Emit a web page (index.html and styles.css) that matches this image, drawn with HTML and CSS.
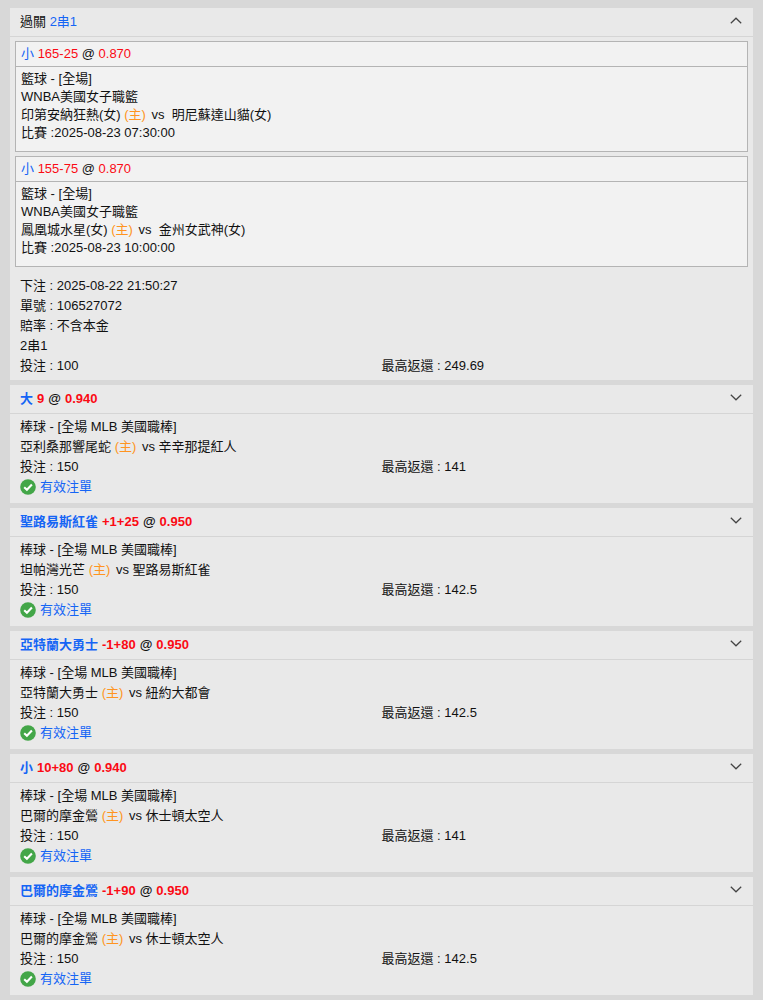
FILE: index.html
```html
<!DOCTYPE html>
<html lang="zh-Hant">
<head>
    <meta charset="UTF-8">
    <meta name="viewport" content="width=device-width, initial-scale=1.0">
    <title>注單</title>
    <link rel="stylesheet" href="styles.css">
</head>
<body>
    <svg width="0" height="0" class="sprite" aria-hidden="true">
        <symbol id="chevron" viewBox="0 0 12 7">
            <path d="M0.8 0.8 L6 5.8 L11.2 0.8" fill="none" stroke="#444" stroke-width="1.2"/>
        </symbol>
        <symbol id="check" viewBox="0 0 16 16">
            <circle cx="8" cy="8" r="7.8" fill="#43a648"/>
            <path d="M4.2 8.3 L6.9 10.8 L11.9 5.6" fill="none" stroke="#fff" stroke-width="2.1"/>
        </symbol>
    </svg>

    <main class="bet-list">
        <!-- Parlay -->
        <section class="bet parlay">
            <button type="button" class="bet-header" aria-expanded="true">
                <span>過關 <span class="pick">2串1</span></span>
                <svg class="chevron up"><use href="#chevron"/></svg>
            </button>
            <div class="legs">
                <article class="leg">
                    <div class="leg-header"><span class="pick">小</span> <span class="odds">165-25</span> @ <span class="odds">0.870</span></div>
                    <div class="leg-body">
                        <div>籃球 - [全場]</div>
                        <div>WNBA美國女子職籃</div>
                        <div>印第安納狂熱(女) <span class="home">(主)</span> vs &nbsp;明尼蘇達山貓(女)</div>
                        <div>比賽 :2025-08-23 07:30:00</div>
                    </div>
                </article>
                <article class="leg">
                    <div class="leg-header"><span class="pick">小</span> <span class="odds">155-75</span> @ <span class="odds">0.870</span></div>
                    <div class="leg-body">
                        <div>籃球 - [全場]</div>
                        <div>WNBA美國女子職籃</div>
                        <div>鳳凰城水星(女) <span class="home">(主)</span> vs &nbsp;金州女武神(女)</div>
                        <div>比賽 :2025-08-23 10:00:00</div>
                    </div>
                </article>
            </div>
            <div class="bet-body">
                <div>下注 : 2025-08-22 21:50:27</div>
                <div>單號 : 106527072</div>
                <div>賠率 : 不含本金</div>
                <div>2串1</div>
                <div class="amounts"><span>投注 : 100</span><span>最高返還 : 249.69</span></div>
            </div>
        </section>

        <!-- Singles -->
        <section class="bet">
            <button type="button" class="bet-header" aria-expanded="false">
                <span class="title"><span class="pick">大</span><span class="odds">9</span><span>@</span><span class="odds">0.940</span></span>
                <svg class="chevron"><use href="#chevron"/></svg>
            </button>
            <div class="bet-body">
                <div>棒球 - [全場 MLB 美國職棒]</div>
                <div>亞利桑那響尾蛇 <span class="home">(主)</span> vs 辛辛那提紅人</div>
                <div class="amounts"><span>投注 : 150</span><span>最高返還 : 141</span></div>
                <div class="status"><svg class="check"><use href="#check"/></svg>有效注單</div>
            </div>
        </section>

        <section class="bet">
            <button type="button" class="bet-header" aria-expanded="false">
                <span class="title"><span class="pick">聖路易斯紅雀</span><span class="odds">+1+25</span><span>@</span><span class="odds">0.950</span></span>
                <svg class="chevron"><use href="#chevron"/></svg>
            </button>
            <div class="bet-body">
                <div>棒球 - [全場 MLB 美國職棒]</div>
                <div>坦帕灣光芒 <span class="home">(主)</span> vs 聖路易斯紅雀</div>
                <div class="amounts"><span>投注 : 150</span><span>最高返還 : 142.5</span></div>
                <div class="status"><svg class="check"><use href="#check"/></svg>有效注單</div>
            </div>
        </section>

        <section class="bet">
            <button type="button" class="bet-header" aria-expanded="false">
                <span class="title"><span class="pick">亞特蘭大勇士</span><span class="odds">-1+80</span><span>@</span><span class="odds">0.950</span></span>
                <svg class="chevron"><use href="#chevron"/></svg>
            </button>
            <div class="bet-body">
                <div>棒球 - [全場 MLB 美國職棒]</div>
                <div>亞特蘭大勇士 <span class="home">(主)</span> vs 紐約大都會</div>
                <div class="amounts"><span>投注 : 150</span><span>最高返還 : 142.5</span></div>
                <div class="status"><svg class="check"><use href="#check"/></svg>有效注單</div>
            </div>
        </section>

        <section class="bet">
            <button type="button" class="bet-header" aria-expanded="false">
                <span class="title"><span class="pick">小</span><span class="odds">10+80</span><span>@</span><span class="odds">0.940</span></span>
                <svg class="chevron"><use href="#chevron"/></svg>
            </button>
            <div class="bet-body">
                <div>棒球 - [全場 MLB 美國職棒]</div>
                <div>巴爾的摩金鶯 <span class="home">(主)</span> vs 休士頓太空人</div>
                <div class="amounts"><span>投注 : 150</span><span>最高返還 : 141</span></div>
                <div class="status"><svg class="check"><use href="#check"/></svg>有效注單</div>
            </div>
        </section>

        <section class="bet">
            <button type="button" class="bet-header" aria-expanded="false">
                <span class="title"><span class="pick">巴爾的摩金鶯</span><span class="odds">-1+90</span><span>@</span><span class="odds">0.950</span></span>
                <svg class="chevron"><use href="#chevron"/></svg>
            </button>
            <div class="bet-body">
                <div>棒球 - [全場 MLB 美國職棒]</div>
                <div>巴爾的摩金鶯 <span class="home">(主)</span> vs 休士頓太空人</div>
                <div class="amounts"><span>投注 : 150</span><span>最高返還 : 142.5</span></div>
                <div class="status"><svg class="check"><use href="#check"/></svg>有效注單</div>
            </div>
        </section>
    </main>
</body>
</html>
```
FILE: styles.css
```css
* {
    box-sizing: border-box;
}

body {
    margin: 0;
    padding: 8px 10px 5px;
    background: #d8d8d8;
    color: #111;
    font-family: "Liberation Sans", Arial, "Noto Sans CJK TC", sans-serif;
    font-size: 13px;
    line-height: 20px;
}

.sprite {
    position: absolute;
}

.bet-list {
    display: flex;
    flex-direction: column;
    gap: 5px;
}

.bet {
    background: #e9e9e9;
}

.bet-header {
    display: flex;
    justify-content: space-between;
    align-items: center;
    width: 100%;
    height: 29px;
    padding: 0 11px 0 10px;
    border: 0;
    border-bottom: 1px solid #d5d5d5;
    background: none;
    color: inherit;
    font: inherit;
    font-weight: bold;
    cursor: pointer;
}

.parlay .bet-header {
    font-weight: normal;
}

.title {
    display: flex;
    gap: 4px;
}

.chevron {
    width: 12px;
    height: 7px;
    margin-bottom: 3px;
}

.chevron.up {
    transform: rotate(180deg);
}

.legs {
    display: flex;
    flex-direction: column;
    gap: 4px;
    padding: 4px 5px 6px;
}

.leg {
    border: 1px solid #b4b4b4;
    background: #f2f2f2;
}

.leg-header {
    padding: 2px 5px;
    border-bottom: 1px solid #b4b4b4;
}

.leg-body {
    padding: 3px 5px 9px;
    line-height: 18px;
}

.bet-body {
    padding: 3px 10px 6px;
}

.parlay .bet-body {
    padding-bottom: 4px;
}

.amounts {
    display: grid;
    grid-template-columns: 1fr 1fr;
}

.status {
    display: flex;
    align-items: center;
    gap: 4px;
    color: #1565f5;
}

.check {
    width: 16px;
    height: 16px;
}

.pick {
    color: #1565f5;
}

.odds {
    color: #fb0a14;
}

.home {
    margin-right: 2px;
    color: #ff9420;
}
```
